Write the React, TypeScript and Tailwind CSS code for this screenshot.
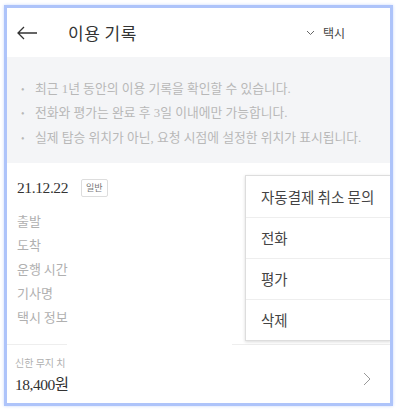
import React from 'react';

const SANS = { fontFamily: '"Noto Sans CJK KR", "Noto Sans", sans-serif' };

const NOTES = [
  '최근 1년 동안의 이용 기록을 확인할 수 있습니다.',
  '전화와 평가는 완료 후 3일 이내에만 가능합니다.',
  '실제 탑승 위치가 아닌, 요청 시점에 설정한 위치가 표시됩니다.',
];

const ROWS = ['출발', '도착', '운행 시간', '기사명', '택시 정보'];

const MENU = ['자동결제 취소 문의', '전화', '평가', '삭제'];

export default function App() {
  return (
    <div
      className="w-[397px] h-[412px] bg-white pt-[5px] pl-[4px]"
      style={{ fontFamily: '"Liberation Serif", "Noto Sans CJK KR", serif' }}
    >
      <div className="relative w-[389px] h-[401px] border-[3px] border-[#aec4fa] shadow-[0_0_3px_#c9d8fd] flex flex-col overflow-hidden">
        {/* Header */}
        <div className="h-[49px] flex items-center flex-shrink-0" style={SANS}>
          <svg width="22" height="14" viewBox="0 0 22 14" className="ml-[9px]">
            <path d="M21 7H2M8 1L2 7l6 6" fill="none" stroke="#333" strokeWidth="1.3" />
          </svg>
          <h1 className="ml-[30px] text-[17px] text-[#333] tracking-[0.5px]">이용 기록</h1>
          <div className="ml-auto mr-[45px] flex items-center gap-[8px] text-[12px] text-[#444]">
            <svg width="9" height="6" viewBox="0 0 9 6">
              <path d="M1 1l3.5 3.5L8 1" fill="none" stroke="#666" strokeWidth="1" />
            </svg>
            택시
          </div>
        </div>

        {/* Notes */}
        <div className="h-[106px] bg-[#f4f5f7] pt-[22px] pl-[14px] flex flex-col gap-[4px] flex-shrink-0">
          {NOTES.map(n => (
            <div key={n} className="flex items-center h-[20.5px] text-[12.8px] text-[#b8b8b8]">
              <span className="w-[14px] text-[10px]">•</span>
              <span>{n}</span>
            </div>
          ))}
        </div>

        {/* Card */}
        <div className="h-[181px] flex-shrink-0 px-[10px] pt-[13px]">
          <div className="flex items-center gap-[13px]">
            <span className="text-[15.5px] text-[#333] tracking-[-0.4px]">21.12.22</span>
            <span className="border border-[#ddd] rounded-[2px] px-[4px] h-[18px] flex items-center text-[9px] text-[#777]" style={SANS}>
              일반
            </span>
          </div>
          <div className="mt-[9px] flex flex-col" style={SANS}>
            {ROWS.map(r => (
              <div key={r} className="h-[24px] flex items-center text-[13px] text-[#b0b0b0]">
                {r}
              </div>
            ))}
          </div>
        </div>

        {/* Divider */}
        <div className="flex flex-shrink-0">
          <div className="w-[60px] h-px bg-[#eee]" />
          <div className="w-[165px]" />
          <div className="flex-1 h-px bg-[#eee]" />
        </div>

        {/* Payment */}
        <div className="flex-1 flex items-center px-[8px] pt-[4px]">
          <div className="flex flex-col">
            <span className="whitespace-nowrap text-[10px] text-[#b0b0b0]" style={SANS}>
              신한 무지 치
            </span>
            <span className="mt-[3px] text-[15.5px] text-[#333] tracking-[-0.5px]">18,400원</span>
          </div>
          <svg width="8" height="14" viewBox="0 0 8 14" className="ml-auto mr-[11px] mt-[6px]">
            <path d="M1 1l6 6-6 6" fill="none" stroke="#999" strokeWidth="1" />
          </svg>
        </div>

        {/* Dropdown menu */}
        <div
          className="absolute left-[238px] top-[167px] w-[146px] bg-white border border-[#ddd] shadow-[0_1px_3px_rgba(0,0,0,0.15)]"
          style={SANS}
        >
          {MENU.map((m, i) => (
            <div
              key={m}
              className={`h-[41px] flex items-center pl-[15px] text-[14.5px] text-[#444] ${i > 0 ? 'border-t border-[#eee]' : ''}`}
            >
              {m}
            </div>
          ))}
        </div>
      </div>
    </div>
  );
}
